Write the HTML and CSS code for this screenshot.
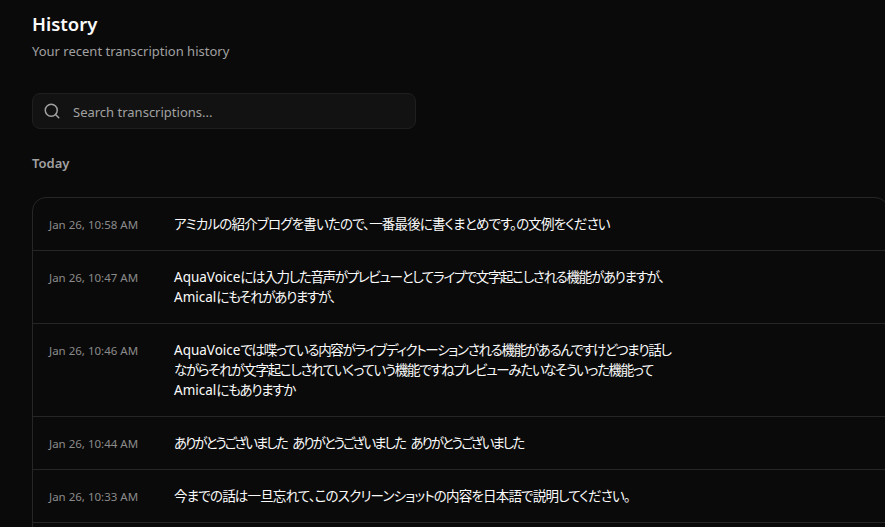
FILE: index.html
```html
<!DOCTYPE html>
<html lang="en">

<head>
    <meta charset="UTF-8" />
    <meta name="viewport" content="width=device-width, initial-scale=1.0" />
    <title>History</title>
    <link rel="stylesheet" href="styles.css">
</head>

<body>
    <header class="page-head">
        <h1>History</h1>
        <p>Your recent transcription history</p>
    </header>

    <div class="search">
        <svg class="search-icon" width="18" height="18" viewBox="0 0 24 24" fill="none" stroke="currentColor" stroke-width="2" stroke-linecap="round" stroke-linejoin="round">
            <circle cx="11" cy="11" r="8"></circle>
            <path d="m21 21-4.3-4.3"></path>
        </svg>
        <span class="search-label">Search transcriptions...</span>
    </div>

    <h2 class="day">Today</h2>

    <div class="list">
        <div class="row">
            <div class="time">Jan 26, 10:58 AM</div>
            <div class="text" lang="ja">アミカルの紹介ブログを書いたので、一番最後に書くまとめです。の文例をください</div>
        </div>
        <div class="row">
            <div class="time">Jan 26, 10:47 AM</div>
            <div class="text tight" lang="ja"><span class="latin">AquaVoice</span>には入力した音声がプレビューとしてライブで文字起こしされる機能がありますが、<br><span class="latin">Amical</span>にもそれがありますが、</div>
        </div>
        <div class="row">
            <div class="time">Jan 26, 10:46 AM</div>
            <div class="text tight" lang="ja"><span class="latin">AquaVoice</span>では喋っている内容がライブディクトーションされる機能があるんですけどつまり話し<br>ながらそれが文字起こしされていくっていう機能ですねプレビューみたいなそういった機能って<br><span class="latin">Amical</span>にもありますか</div>
        </div>
        <div class="row">
            <div class="time">Jan 26, 10:44 AM</div>
            <div class="text kana" lang="ja">ありがとうございました ありがとうございました ありがとうございました</div>
        </div>
        <div class="row">
            <div class="time">Jan 26, 10:33 AM</div>
            <div class="text" lang="ja">今までの話は一旦忘れて、このスクリーンショットの内容を日本語で説明してください。</div>
        </div>
    </div>
</body>

</html>
```

FILE: styles.css
```css
:root{
    --bg: #0a0a0a;
    --line: #262626;
    --muted: #a1a1a1;
    --fg: #fafafa;
}

*{
    margin: 0;
    padding: 0;
    box-sizing: border-box;
}
html, body{
    height: 100%;
    overflow: hidden;
}
body{
    padding: 13px 0 0 32px;
    background-color: var(--bg);
    color: var(--fg);
    font-family: "Noto Sans", "Noto Sans CJK JP", sans-serif;
}
.page-head h1{
    font-size: 18.5px;
    font-weight: 600;
    line-height: 22px;
}
.page-head p{
    margin-top: 6px;
    font-size: 13px;
    line-height: 20px;
    color: var(--muted);
}
.search{
    display: flex;
    align-items: center;
    gap: 12px;
    width: 384px;
    height: 36px;
    margin-top: 32px;
    padding: 0 10px;
    background-color: #121212;
    border: 1px solid #1f1f1f;
    border-radius: 8px;
    font-size: 13px;
    color: var(--muted);
}
.search-icon{
    flex: none;
}
.search-label{
    padding-top: 1px;
}
.day{
    margin-top: 24px;
    font-size: 13px;
    font-weight: 600;
    line-height: 20px;
    color: var(--muted);
}
.list{
    width: 857px;
    min-height: 400px;
    margin-top: 24px;
    border: 1px solid var(--line);
    border-radius: 14px;
}
.row{
    display: flex;
    padding: 16px;
    border-bottom: 1px solid var(--line);
}
.time{
    flex: none;
    width: 125px;
    margin-bottom: -2px;
    font-size: 11.5px;
    line-height: 22px;
    color: #8a8a8a;
}
.text{
    font-size: 13.5px;
    line-height: 20px;
    font-feature-settings: "palt";
    letter-spacing: -0.82px;
}
.text.tight{
    letter-spacing: -1.3px;
}
.text.kana{
    letter-spacing: -2px;
    word-spacing: 4px;
}
.latin{
    letter-spacing: 0;
}
```
